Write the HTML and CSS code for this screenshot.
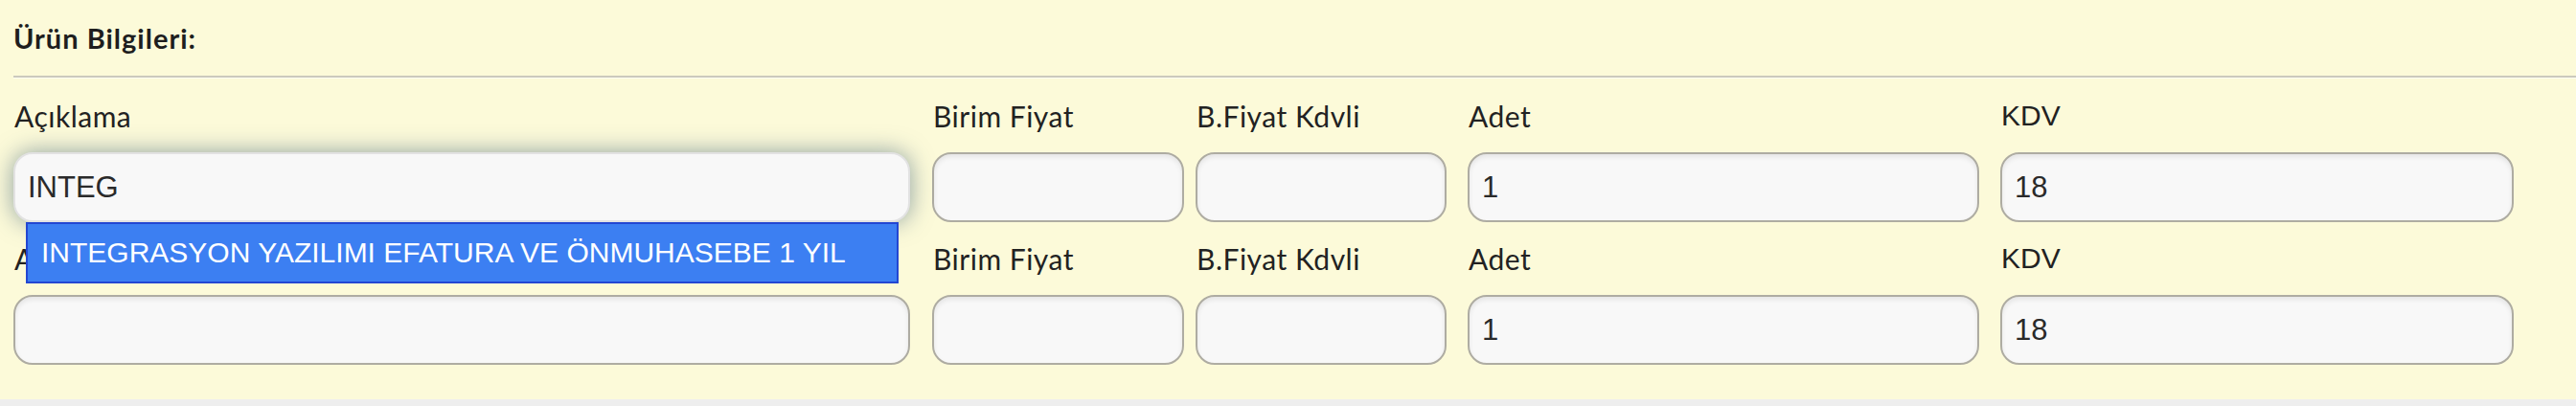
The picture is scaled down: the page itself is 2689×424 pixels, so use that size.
FILE: index.html
```
<!DOCTYPE html>
<html lang="tr">

<head>
     <meta charset="UTF-8">
     <meta name="viewport" content="width=device-width, initial-scale=1.0">
     <title>Ürün Bilgileri</title>
     <link rel="stylesheet" href="styles.css">
</head>

<body>
     <div class="panel">
          <h4 class="panel-title">Ürün Bilgileri:</h4>
          <hr class="panel-line">

          <div class="urun-row">
               <div class="field col-aciklama">
                    <label>Açıklama</label>
                    <div class="ac-wrap">
                         <input type="text" class="focused" value="INTEG">
                         <div class="ac-list">
                              <div class="ac-item">INTEGRASYON YAZILIMI EFATURA VE ÖNMUHASEBE 1 YIL</div>
                         </div>
                    </div>
               </div>
               <div class="field col-fiyat">
                    <label>Birim Fiyat</label>
                    <input type="text" value="">
               </div>
               <div class="field col-kdvli">
                    <label>B.Fiyat Kdvli</label>
                    <input type="text" value="">
               </div>
               <div class="field col-adet">
                    <label>Adet</label>
                    <input type="text" value="1">
               </div>
               <div class="field col-kdv">
                    <label class="plain">KDV</label>
                    <input type="text" value="18">
               </div>
          </div>

          <div class="urun-row">
               <div class="field col-aciklama">
                    <label>Açıklama</label>
                    <input type="text" value="">
               </div>
               <div class="field col-fiyat">
                    <label>Birim Fiyat</label>
                    <input type="text" value="">
               </div>
               <div class="field col-kdvli">
                    <label>B.Fiyat Kdvli</label>
                    <input type="text" value="">
               </div>
               <div class="field col-adet">
                    <label>Adet</label>
                    <input type="text" value="1">
               </div>
               <div class="field col-kdv">
                    <label class="plain">KDV</label>
                    <input type="text" value="18">
               </div>
          </div>
     </div>
</body>

</html>
```

FILE: styles.css
```
* {
     padding: 0;
     margin: 0;
     box-sizing: border-box;
}

body {
     background: #eeeeee;
     font-family: 'Lato', 'Noto Sans', sans-serif;
     color: #222;
}

.panel {
     background: #fcfad9;
     padding: 23px 0 36px 14px;
}

.panel-title {
     font-size: 29px;
     line-height: 34px;
     font-weight: 700;
     letter-spacing: 1px;
     color: #1e1e1e;
}

.panel-line {
     margin-top: 22px;
     height: 0;
     border: none;
     border-top: 2px solid #cbc9bd;
     border-bottom: 1px solid #fffff2;
}

.urun-row {
     display: flex;
     margin-top: 19px;
}

.urun-row + .urun-row {
     margin-top: 18px;
}

.field {
     display: flex;
     flex-direction: column;
}

.field label {
     font-size: 30px;
     line-height: 40px;
     letter-spacing: 0.5px;
     margin-bottom: 18px;
     padding-left: 1px;
     color: #222;
}

.field label.plain {
     font-family: 'Liberation Sans', Arial, sans-serif;
     letter-spacing: 0;
}

.col-aciklama { width: 936px; margin-right: 23px; }
.col-fiyat { width: 263px; margin-right: 12px; }
.col-kdvli { width: 262px; margin-right: 22px; }
.col-adet { width: 534px; margin-right: 22px; }
.col-kdv { width: 536px; }

.field input {
     width: 100%;
     height: 73px;
     padding: 0 13px;
     font-family: 'Liberation Sans', Arial, sans-serif;
     font-size: 31px;
     color: #2a2a2a;
     background: #f8f8f8;
     border: 2px solid #aeaca2;
     border-radius: 20px;
     box-shadow: inset 0 3px 5px rgba(0, 0, 0, 0.08);
     outline: none;
}

.field input.focused {
     border-color: #e2e2e2;
     box-shadow: 0 0 24px rgba(50, 85, 115, 0.55);
}

.ac-wrap {
     position: relative;
}

.ac-list {
     position: absolute;
     top: 100%;
     left: 13px;
     width: 911px;
     z-index: 5;
}

.ac-item {
     height: 64px;
     padding-left: 14px;
     font-family: 'Liberation Sans', Arial, sans-serif;
     font-size: 30px;
     line-height: 60px;
     color: #fff;
     background: #3c7ff2;
     border: 2px solid #2347d2;
}
```
